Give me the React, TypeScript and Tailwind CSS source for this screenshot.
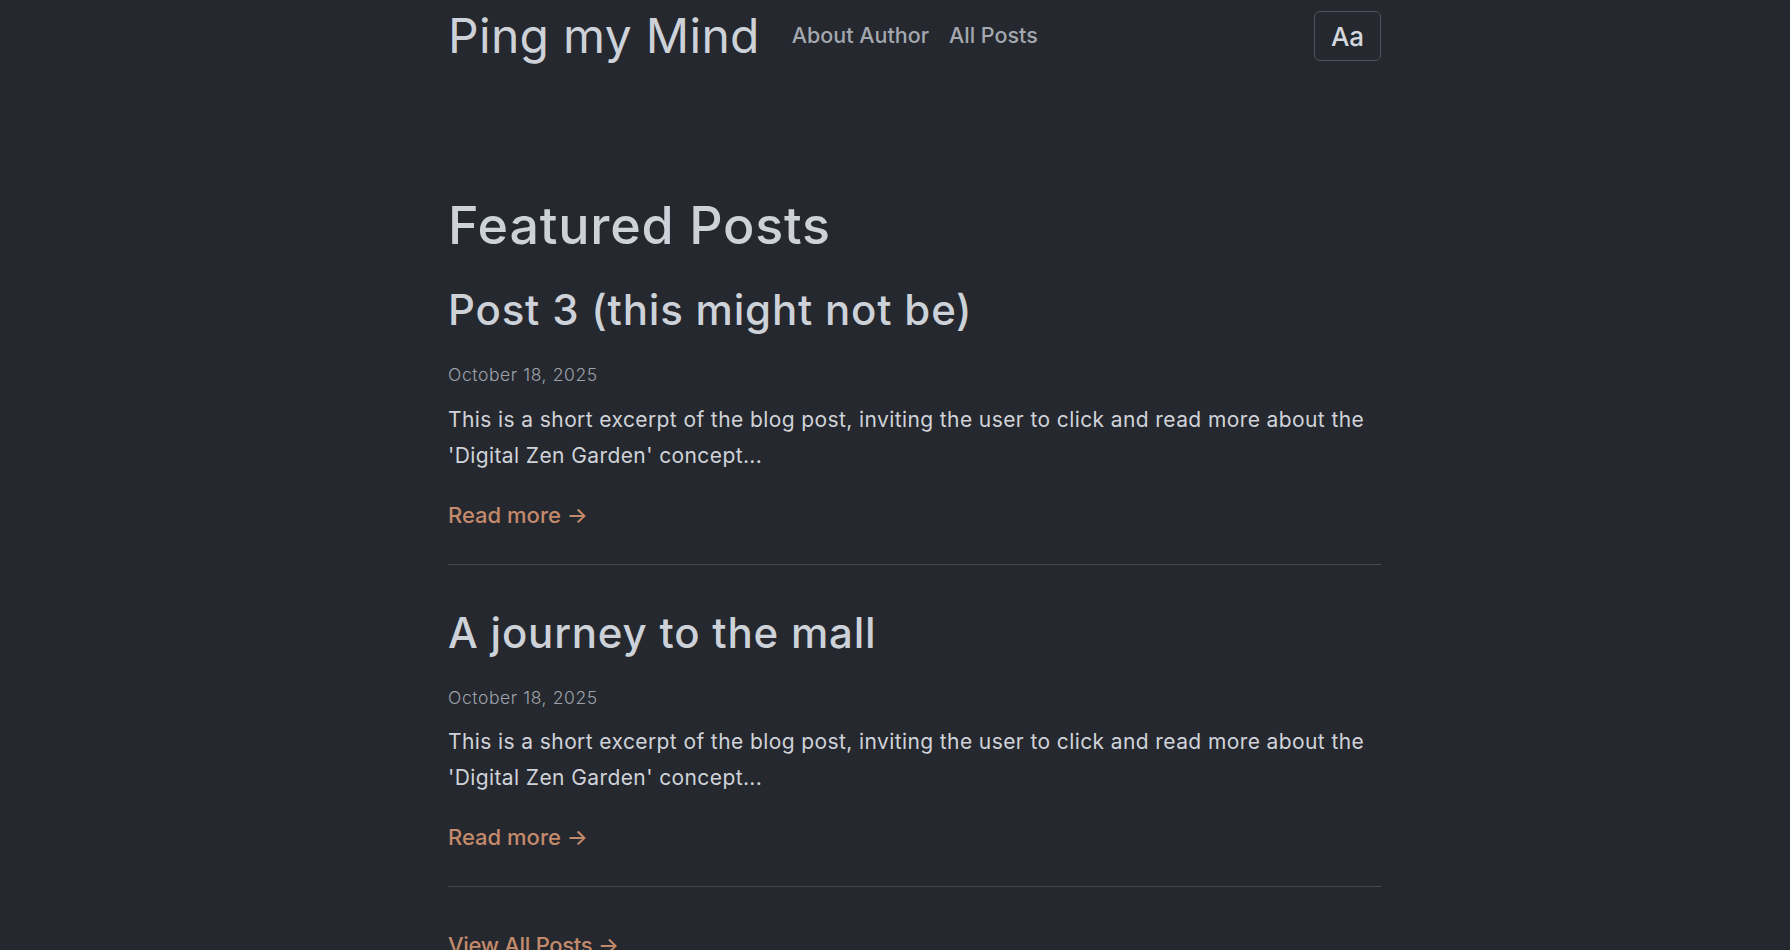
const posts = [
  {
    title: "Post 3 (this might not be)",
    date: "October 18, 2025",
    excerpt:
      "This is a short excerpt of the blog post, inviting the user to click and read more about the 'Digital Zen Garden' concept...",
  },
  {
    title: "A journey to the mall",
    date: "October 18, 2025",
    excerpt:
      "This is a short excerpt of the blog post, inviting the user to click and read more about the 'Digital Zen Garden' concept...",
  },
];

export default function App() {
  return (
    <div
      className="min-h-screen bg-[#25282e] text-[#cdd1d8] pl-[448px]"
      style={{ fontFamily: "Inter, 'Noto Sans', sans-serif" }}
    >
      <div className="w-[933px]">
        {/* Header */}
        <header className="h-[72px] flex items-center justify-between">
          <div className="flex items-center">
            <a href="#" className="text-[48px] leading-none font-normal tracking-[0.3px] text-[#cdd1d8]">
              Ping my Mind
            </a>
            <nav className="ml-[32px] flex items-center gap-[20px] text-[21.5px] leading-none font-medium text-[#a3a7af]">
              <a href="#">About Author</a>
              <a href="#">All Posts</a>
            </nav>
          </div>
          <button className="w-[67px] h-[50px] rounded-[6px] border border-[#4f535b] text-[26px] font-medium text-[#d4d7dd] flex items-center justify-center">
            Aa
          </button>
        </header>

        {/* Featured */}
        <main className="pt-[128px]">
          <h1 className="text-[52px] leading-none font-medium tracking-[0.8px] text-[#cdd1d8] mb-[37px]">
            Featured Posts
          </h1>

          {posts.map((post, idx) => (
            <article
              key={idx}
              className={`border-b border-[#45484f] pb-[38px] ${idx > 0 ? "pt-[47px]" : ""}`}
            >
              <h2 className="text-[42px] leading-none font-medium tracking-[0.8px] text-[#cdd1d8]">{post.title}</h2>
              <p className="mt-[35px] text-[17.5px] leading-none font-light tracking-[0.6px] text-[#9ea2aa]">
                {post.date}
              </p>
              <p className="mt-[18px] text-[21px] leading-[36px] font-normal tracking-[0.4px] text-[#d0d3d9]">
                {post.excerpt}
              </p>
              <a href="#" className="mt-[30px] block text-[22px] leading-none font-medium text-[#c48a6c]">
                Read more →
              </a>
            </article>
          ))}

          <a href="#" className="mt-[47px] block text-[22px] leading-none font-medium tracking-[-0.3px] text-[#c48a6c]">
            View All Posts →
          </a>
        </main>
      </div>
    </div>
  );
}
